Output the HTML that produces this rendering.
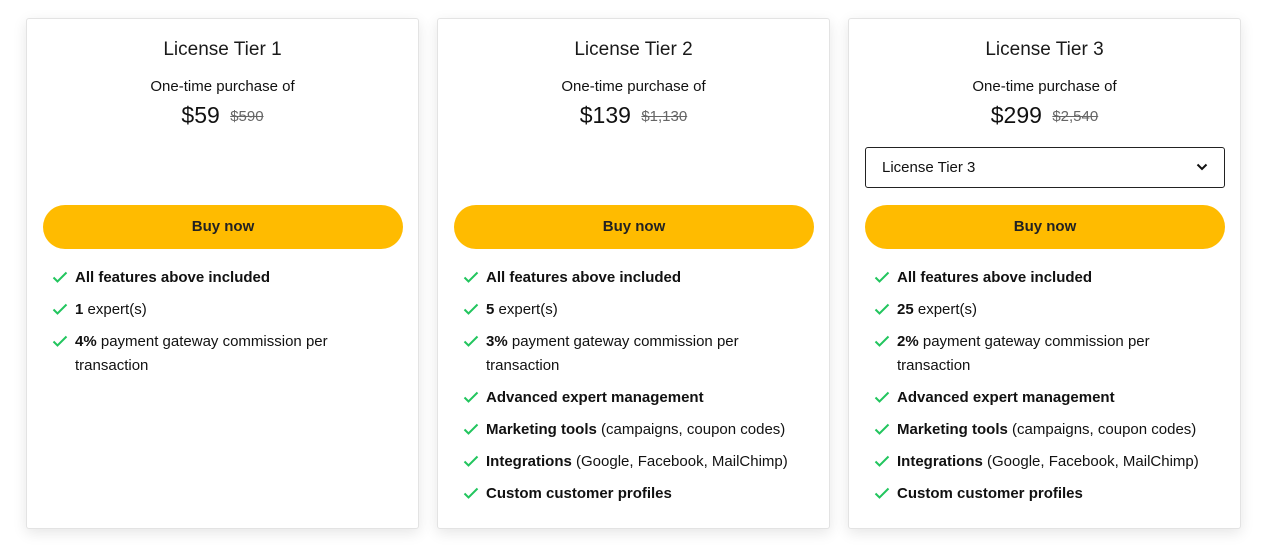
<!DOCTYPE html>
<html><head><style>
body{margin:0;background:#fff;font-family:"Liberation Sans",sans-serif;color:#111;width:1270px;height:553px;overflow:hidden;position:relative}
.card{position:absolute;top:18px;width:393px;height:511px;box-sizing:border-box;border:1px solid #e3e3e3;border-radius:3px;background:#fff;box-shadow:0 4px 14px rgba(0,0,0,.10)}
.t{position:absolute;top:19px;left:0;right:0;text-align:center;font-size:19px;line-height:24px;color:#1a1a1a}
.o{position:absolute;top:59px;left:0;right:0;text-align:center;font-size:15px;line-height:18px}
.p{position:absolute;top:83px;left:0;right:0;text-align:center;font-size:23px;line-height:26px}
.p s{font-size:15px;color:#666;margin-left:4px;vertical-align:2px}
.sel{position:absolute;top:128px;left:16px;width:360px;height:41px;box-sizing:border-box;border:1px solid #222;border-radius:3px;font-size:15px;line-height:39px;padding-left:16px}
.sel svg{position:absolute;right:16px;top:15px}
.b{position:absolute;top:186px;left:16px;width:360px;height:44px;border-radius:22px;background:#ffbb00;text-align:center;font-weight:bold;font-size:15px;line-height:44px;color:#222}
ul{position:absolute;top:247px;left:24px;right:20px;margin:0;padding:0;list-style:none;font-size:15px;line-height:24px}
li{position:relative;padding-left:24px;margin-bottom:8px}
li svg{position:absolute;left:1px;top:5px}
</style></head><body>
<svg width="0" height="0" style="position:absolute"><defs><symbol id="c" viewBox="0 0 16 12"><path d="M1.5 6.5 L5.5 10.5 L14.5 1.5" fill="none" stroke="#22c55e" stroke-width="2"/></symbol></defs></svg>

<div class="card" style="left:26px">
<div class="t">License Tier 1</div><div class="o">One-time purchase of</div>
<div class="p">$59 <s>$590</s></div>
<div class="b">Buy now</div>
<ul>
<li><svg width="16" height="12"><use href="#c"/></svg><b>All features above included</b></li>
<li><svg width="16" height="12"><use href="#c"/></svg><b>1</b> expert(s)</li>
<li><svg width="16" height="12"><use href="#c"/></svg><b>4%</b> payment gateway commission per transaction</li>
</ul></div>

<div class="card" style="left:437px">
<div class="t">License Tier 2</div><div class="o">One-time purchase of</div>
<div class="p">$139 <s>$1,130</s></div>
<div class="b">Buy now</div>
<ul>
<li><svg width="16" height="12"><use href="#c"/></svg><b>All features above included</b></li>
<li><svg width="16" height="12"><use href="#c"/></svg><b>5</b> expert(s)</li>
<li><svg width="16" height="12"><use href="#c"/></svg><b>3%</b> payment gateway commission per transaction</li>
<li><svg width="16" height="12"><use href="#c"/></svg><b>Advanced expert management</b></li>
<li><svg width="16" height="12"><use href="#c"/></svg><b>Marketing tools</b> (campaigns, coupon codes)</li>
<li><svg width="16" height="12"><use href="#c"/></svg><b>Integrations</b> (Google, Facebook, MailChimp)</li>
<li><svg width="16" height="12"><use href="#c"/></svg><b>Custom customer profiles</b></li>
</ul></div>

<div class="card" style="left:848px">
<div class="t">License Tier 3</div><div class="o">One-time purchase of</div>
<div class="p">$299 <s>$2,540</s></div>
<div class="sel">License Tier 3<svg width="12" height="8" viewBox="0 0 12 8"><path d="M1.5 1.5 L6 6 L10.5 1.5" fill="none" stroke="#111" stroke-width="2"/></svg></div>
<div class="b">Buy now</div>
<ul>
<li><svg width="16" height="12"><use href="#c"/></svg><b>All features above included</b></li>
<li><svg width="16" height="12"><use href="#c"/></svg><b>25</b> expert(s)</li>
<li><svg width="16" height="12"><use href="#c"/></svg><b>2%</b> payment gateway commission per transaction</li>
<li><svg width="16" height="12"><use href="#c"/></svg><b>Advanced expert management</b></li>
<li><svg width="16" height="12"><use href="#c"/></svg><b>Marketing tools</b> (campaigns, coupon codes)</li>
<li><svg width="16" height="12"><use href="#c"/></svg><b>Integrations</b> (Google, Facebook, MailChimp)</li>
<li><svg width="16" height="12"><use href="#c"/></svg><b>Custom customer profiles</b></li>
</ul></div>
</body></html>
